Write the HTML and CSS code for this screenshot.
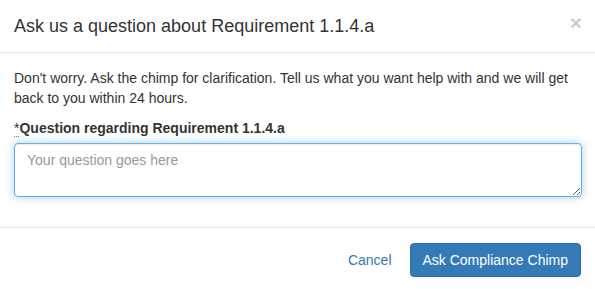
FILE: index.html
```html
<!DOCTYPE html>
<html lang="en">
<head>
  <meta charset="UTF-8" />
  <meta name="viewport" content="width=device-width, initial-scale=1.0" />
  <title>Ask a question</title>
  <link rel="stylesheet" href="styles.css">
</head>
<body>

  <div class="modal-content">
    <div class="modal-header">
      <button type="button" class="close">&times;</button>
      <h4 class="modal-title">Ask us a question about Requirement 1.1.4.a</h4>
    </div>
    <div class="modal-body">
      <p>Don't worry. Ask the chimp for clarification. Tell us what you want help with and we will get back to you within 24 hours.</p>
      <div class="form-group">
        <label for="question"><abbr title="required">*</abbr>Question regarding Requirement 1.1.4.a</label>
        <textarea id="question" class="form-control focus" rows="2" placeholder="Your question goes here"></textarea>
      </div>
    </div>
    <div class="modal-footer">
      <button type="button" class="btn btn-link">Cancel</button>
      <button type="button" class="btn btn-primary">Ask Compliance Chimp</button>
    </div>
  </div>

</body>
</html>
```

FILE: styles.css
```css
* { box-sizing: border-box; }
body { margin: 0; background: #fff; font-family: "Liberation Sans", Arial, sans-serif; font-size: 14px; line-height: 20px; color: #333; }
.modal-content { width: 595px; background: #fff; }
.modal-header { padding: 15px 13px 15px 14px; border-bottom: 1px solid #e5e5e5; }
.modal-title { margin: 0; font-size: 18px; font-weight: normal; line-height: 22px; }
.close { float: right; margin-top: -3px; margin-right: 0; padding: 0; border: 0; background: none; font-family: inherit; font-size: 21px; font-weight: bold; line-height: 1; color: #000; opacity: .2; cursor: pointer; }
.modal-body { padding: 15px 13px 15px 14px; }
.modal-body p { margin: 0 0 10px; }
.form-group { margin-bottom: 15px; }
label { display: inline-block; margin-bottom: 5px; font-weight: bold; }
abbr { text-decoration: none; border-bottom: 1px dotted #777; cursor: help; font-weight: normal; }
.form-control { display: block; width: 100%; height: 54px; padding: 6px 12px; font-family: inherit; font-size: 14px; line-height: 20px; color: #555; background: #fff; border: 1px solid #ccc; border-radius: 4px; resize: vertical; box-shadow: inset 0 1px 1px rgba(0,0,0,.075); }
.form-control::placeholder { color: #999; }
.form-control.focus, .form-control:focus { border-color: #66afe9; outline: 0; box-shadow: inset 0 1px 1px rgba(0,0,0,.075), 0 0 8px rgba(102,175,233,.6); }
.modal-footer { display: flex; justify-content: flex-end; gap: 5px; padding: 15px 14px 15px 14px; border-top: 1px solid #e5e5e5; }
.btn { padding: 6px 12px; font-family: inherit; font-size: 14px; line-height: 20px; border: 1px solid transparent; border-radius: 4px; cursor: pointer; }
.btn-link { background: none; color: #337ab7; }
.btn-primary { background: #337ab7; border-color: #2e6da4; color: #fff; }
```
